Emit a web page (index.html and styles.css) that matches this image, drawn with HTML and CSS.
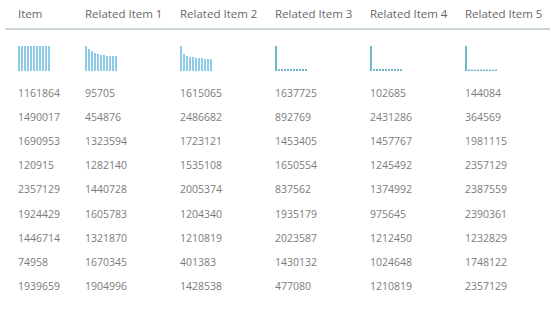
FILE: index.html
```html
<!DOCTYPE html>
<html lang="en">
<head>
  <meta charset="UTF-8">
  <title>Related Items</title>
  <link rel="stylesheet" href="styles.css">
</head>
<body>
  <div class="table">
    <div class="row head">
      <div class="cell">Item</div>
      <div class="cell">Related Item 1</div>
      <div class="cell">Related Item 2</div>
      <div class="cell">Related Item 3</div>
      <div class="cell">Related Item 4</div>
      <div class="cell">Related Item 5</div>
    </div>

    <div class="row spark">
      <div class="cell">
        <svg width="34" height="25" viewBox="0 0 34 25">
          <g fill="#8ecbe8">
            <rect x="0" y="0" width="2" height="25"/><rect x="3" y="0" width="2" height="25"/>
            <rect x="6" y="0" width="2" height="25"/><rect x="9" y="0" width="2" height="25"/>
            <rect x="12" y="0" width="2" height="25"/><rect x="15" y="0" width="2" height="25"/>
            <rect x="18" y="0" width="2" height="25"/><rect x="21" y="0" width="2" height="25"/>
            <rect x="24" y="0" width="2" height="25"/><rect x="27" y="0" width="2" height="25"/>
            <rect x="30" y="0" width="2" height="25"/>
          </g>
        </svg>
      </div>
      <div class="cell">
        <svg width="34" height="25" viewBox="0 0 34 25">
          <g fill="#8ecbe8">
            <rect x="0" y="0" width="2" height="25"/><rect x="3" y="3" width="2" height="22"/>
            <rect x="6" y="5" width="2" height="20"/><rect x="9" y="7" width="2" height="18"/>
            <rect x="12" y="8" width="2" height="17"/><rect x="15" y="9" width="2" height="16"/>
            <rect x="18" y="9" width="2" height="16"/><rect x="21" y="10" width="2" height="15"/>
            <rect x="24" y="10" width="2" height="15"/><rect x="27" y="10" width="2" height="15"/>
            <rect x="30" y="10" width="2" height="15"/>
          </g>
        </svg>
      </div>
      <div class="cell">
        <svg width="34" height="25" viewBox="0 0 34 25">
          <g fill="#8ecbe8">
            <rect x="0" y="0" width="2" height="25"/><rect x="3" y="8" width="2" height="17"/>
            <rect x="6" y="10" width="2" height="15"/><rect x="9" y="11" width="2" height="14"/>
            <rect x="12" y="11" width="2" height="14"/><rect x="15" y="12" width="2" height="13"/>
            <rect x="18" y="12" width="2" height="13"/><rect x="21" y="12" width="2" height="13"/>
            <rect x="24" y="13" width="2" height="12"/><rect x="27" y="13" width="2" height="12"/>
            <rect x="30" y="13" width="2" height="12"/>
          </g>
        </svg>
      </div>
      <div class="cell">
        <svg width="34" height="25" viewBox="0 0 34 25">
          <g fill="#6fb7cf">
            <rect x="0" y="0" width="2" height="25"/><rect x="3" y="23" width="2" height="2"/>
            <rect x="6" y="23" width="2" height="2"/><rect x="9" y="23" width="2" height="2"/>
            <rect x="12" y="23" width="2" height="2"/><rect x="15" y="23" width="2" height="2"/>
            <rect x="18" y="23" width="2" height="2"/><rect x="21" y="23" width="2" height="2"/>
            <rect x="24" y="23" width="2" height="2"/><rect x="27" y="23" width="2" height="2"/>
            <rect x="30" y="23" width="2" height="2"/>
          </g>
        </svg>
      </div>
      <div class="cell">
        <svg width="34" height="25" viewBox="0 0 34 25">
          <g fill="#6fb7cf">
            <rect x="0" y="0" width="2" height="25"/><rect x="3" y="23" width="2" height="2"/>
            <rect x="6" y="23" width="2" height="2"/><rect x="9" y="23" width="2" height="2"/>
            <rect x="12" y="23" width="2" height="2"/><rect x="15" y="23" width="2" height="2"/>
            <rect x="18" y="23" width="2" height="2"/><rect x="21" y="23" width="2" height="2"/>
            <rect x="24" y="23" width="2" height="2"/><rect x="27" y="23" width="2" height="2"/>
            <rect x="30" y="23" width="2" height="2"/>
          </g>
        </svg>
      </div>
      <div class="cell">
        <svg width="34" height="25" viewBox="0 0 34 25">
          <g fill="#6fb7cf">
            <rect x="0" y="0" width="2" height="25"/><rect x="3" y="23.5" width="2" height="1.5"/>
            <rect x="6" y="23.5" width="2" height="1.5"/><rect x="9" y="23.5" width="2" height="1.5"/>
            <rect x="12" y="23.5" width="2" height="1.5"/><rect x="15" y="23.5" width="2" height="1.5"/>
            <rect x="18" y="23.5" width="2" height="1.5"/><rect x="21" y="23.5" width="2" height="1.5"/>
            <rect x="24" y="23.5" width="2" height="1.5"/><rect x="27" y="23.5" width="2" height="1.5"/>
            <rect x="30" y="23.5" width="2" height="1.5"/>
          </g>
        </svg>
      </div>
    </div>

    <div class="row"><div class="cell">1161864</div><div class="cell">95705</div><div class="cell">1615065</div><div class="cell">1637725</div><div class="cell">102685</div><div class="cell">144084</div></div>
    <div class="row"><div class="cell">1490017</div><div class="cell">454876</div><div class="cell">2486682</div><div class="cell">892769</div><div class="cell">2431286</div><div class="cell">364569</div></div>
    <div class="row"><div class="cell">1690953</div><div class="cell">1323594</div><div class="cell">1723121</div><div class="cell">1453405</div><div class="cell">1457767</div><div class="cell">1981115</div></div>
    <div class="row"><div class="cell">120915</div><div class="cell">1282140</div><div class="cell">1535108</div><div class="cell">1650554</div><div class="cell">1245492</div><div class="cell">2357129</div></div>
    <div class="row"><div class="cell">2357129</div><div class="cell">1440728</div><div class="cell">2005374</div><div class="cell">837562</div><div class="cell">1374992</div><div class="cell">2387559</div></div>
    <div class="row"><div class="cell">1924429</div><div class="cell">1605783</div><div class="cell">1204340</div><div class="cell">1935179</div><div class="cell">975645</div><div class="cell">2390361</div></div>
    <div class="row"><div class="cell">1446714</div><div class="cell">1321870</div><div class="cell">1210819</div><div class="cell">2023587</div><div class="cell">1212450</div><div class="cell">1232829</div></div>
    <div class="row"><div class="cell">74958</div><div class="cell">1670345</div><div class="cell">401383</div><div class="cell">1430132</div><div class="cell">1024648</div><div class="cell">1748122</div></div>
    <div class="row"><div class="cell">1939659</div><div class="cell">1904996</div><div class="cell">1428538</div><div class="cell">477080</div><div class="cell">1210819</div><div class="cell">2357129</div></div>
  </div>
</body>
</html>
```

FILE: styles.css
```css
* {
  margin: 0;
  padding: 0;
  box-sizing: border-box;
}

body {
  font-family: "Open Sans", "Noto Sans", sans-serif;
  background: #ffffff;
  color: #7c7c7c;
  font-size: 10.5px;
}

.table {
  margin: 0 4px 0 5px;
}

.row {
  display: grid;
  grid-template-columns: 67px 95px 95px 95px 95px 1fr;
  height: 24.1px;
  align-items: center;
}

.cell {
  padding-left: 13px;
  white-space: nowrap;
}

.head {
  height: 30px;
  border-bottom: 2px solid #c9d4d9;
  color: #676767;
  font-size: 11.5px;
  padding-bottom: 2px;
}

.spark {
  height: auto;
  padding: 16px 0 10px;
}

.spark svg {
  display: block;
}
```
